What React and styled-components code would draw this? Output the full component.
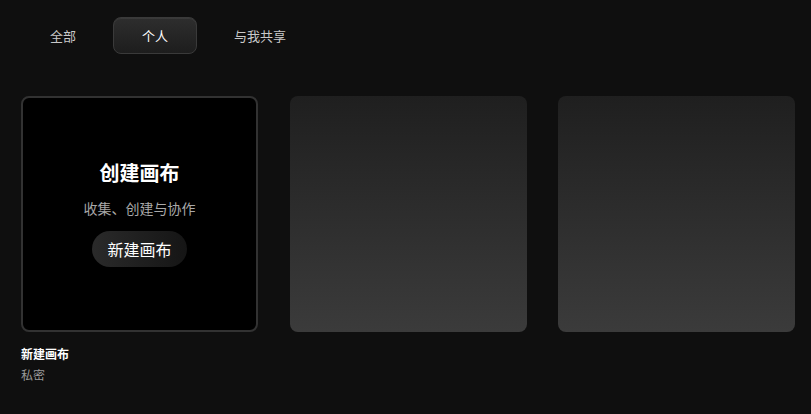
import React from "react";
import styled, { createGlobalStyle } from "styled-components";
import { useState } from "react";

const GlobalStyle = createGlobalStyle`
    html, body {
        margin: 0;
        padding: 0;
        background: #0f0f0f;
    }
    body {
        font-family: "Noto Sans CJK SC", "Noto Sans", sans-serif;
        color: #fff;
    }
`;

const tabs = ["全部", "个人", "与我共享"];

const App = () => {
    const [active, setActive] = useState(1);

    return (
        <>
            <GlobalStyle />
            <Page>
                <Tabs>
                    {tabs.map((t, i) => (
                        <Tab key={t} $active={i === active} onClick={() => setActive(i)}>
                            {t}
                        </Tab>
                    ))}
                </Tabs>
                <Grid>
                    <Item>
                        <NewCard>
                            <Title>创建画布</Title>
                            <Subtitle>收集、创建与协作</Subtitle>
                            <CreateButton>新建画布</CreateButton>
                        </NewCard>
                        <ItemName>新建画布</ItemName>
                        <ItemMeta>私密</ItemMeta>
                    </Item>
                    <Item>
                        <Placeholder />
                    </Item>
                    <Item>
                        <Placeholder />
                    </Item>
                </Grid>
            </Page>
        </>
    );
};

export default App;

const Page = styled.div`
    padding: 17px 16px 0 21px;
    min-height: 100vh;
    box-sizing: border-box;
`;

const Tabs = styled.div`
    display: flex;
    gap: 8px;
    height: 37px;
`;

const Tab = styled.button`
    height: 37px;
    padding: 0 28px;
    border-radius: 8px;
    font-family: inherit;
    font-size: 13px;
    cursor: pointer;
    color: ${p => (p.$active ? "#fff" : "#c8c8c8")};
    border: 1px solid ${p => (p.$active ? "#3a3a3a" : "transparent")};
    background: ${p => (p.$active ? "linear-gradient(180deg, #2e2e2e 0%, #1d1d1d 100%)" : "transparent")};
    box-shadow: ${p => (p.$active ? "inset 0 1px 0 rgba(255,255,255,0.06)" : "none")};
`;

const Grid = styled.div`
    display: grid;
    grid-template-columns: repeat(3, 237px);
    column-gap: 31.5px;
    margin-top: 42px;
`;

const Item = styled.div`
    display: flex;
    flex-direction: column;
`;

const NewCard = styled.div`
    height: 236px;
    box-sizing: border-box;
    border: 2px solid #323232;
    border-radius: 8px;
    background: #000;
    display: flex;
    flex-direction: column;
    align-items: center;
    padding-top: 61px;
`;

const Title = styled.div`
    font-size: 20px;
    font-weight: 700;
    line-height: 28px;
`;

const Subtitle = styled.div`
    margin-top: 11px;
    font-size: 14px;
    line-height: 20px;
    color: #a8a8a8;
`;

const CreateButton = styled.button`
    margin-top: 13px;
    width: 95px;
    height: 36px;
    border: none;
    border-radius: 18px;
    background: linear-gradient(90deg, #2a2a2a 0%, #151515 100%);
    color: #fff;
    font-family: inherit;
    font-size: 16px;
    cursor: pointer;
`;

const Placeholder = styled.div`
    height: 236px;
    border-radius: 8px;
    background: linear-gradient(180deg, #1f1f1f 0%, #3b3b3b 100%);
`;

const ItemName = styled.div`
    margin-top: 13px;
    font-size: 12px;
    font-weight: 700;
    line-height: 18px;
`;

const ItemMeta = styled.div`
    margin-top: 3px;
    font-size: 12px;
    line-height: 18px;
    color: #9a9a9a;
`;
